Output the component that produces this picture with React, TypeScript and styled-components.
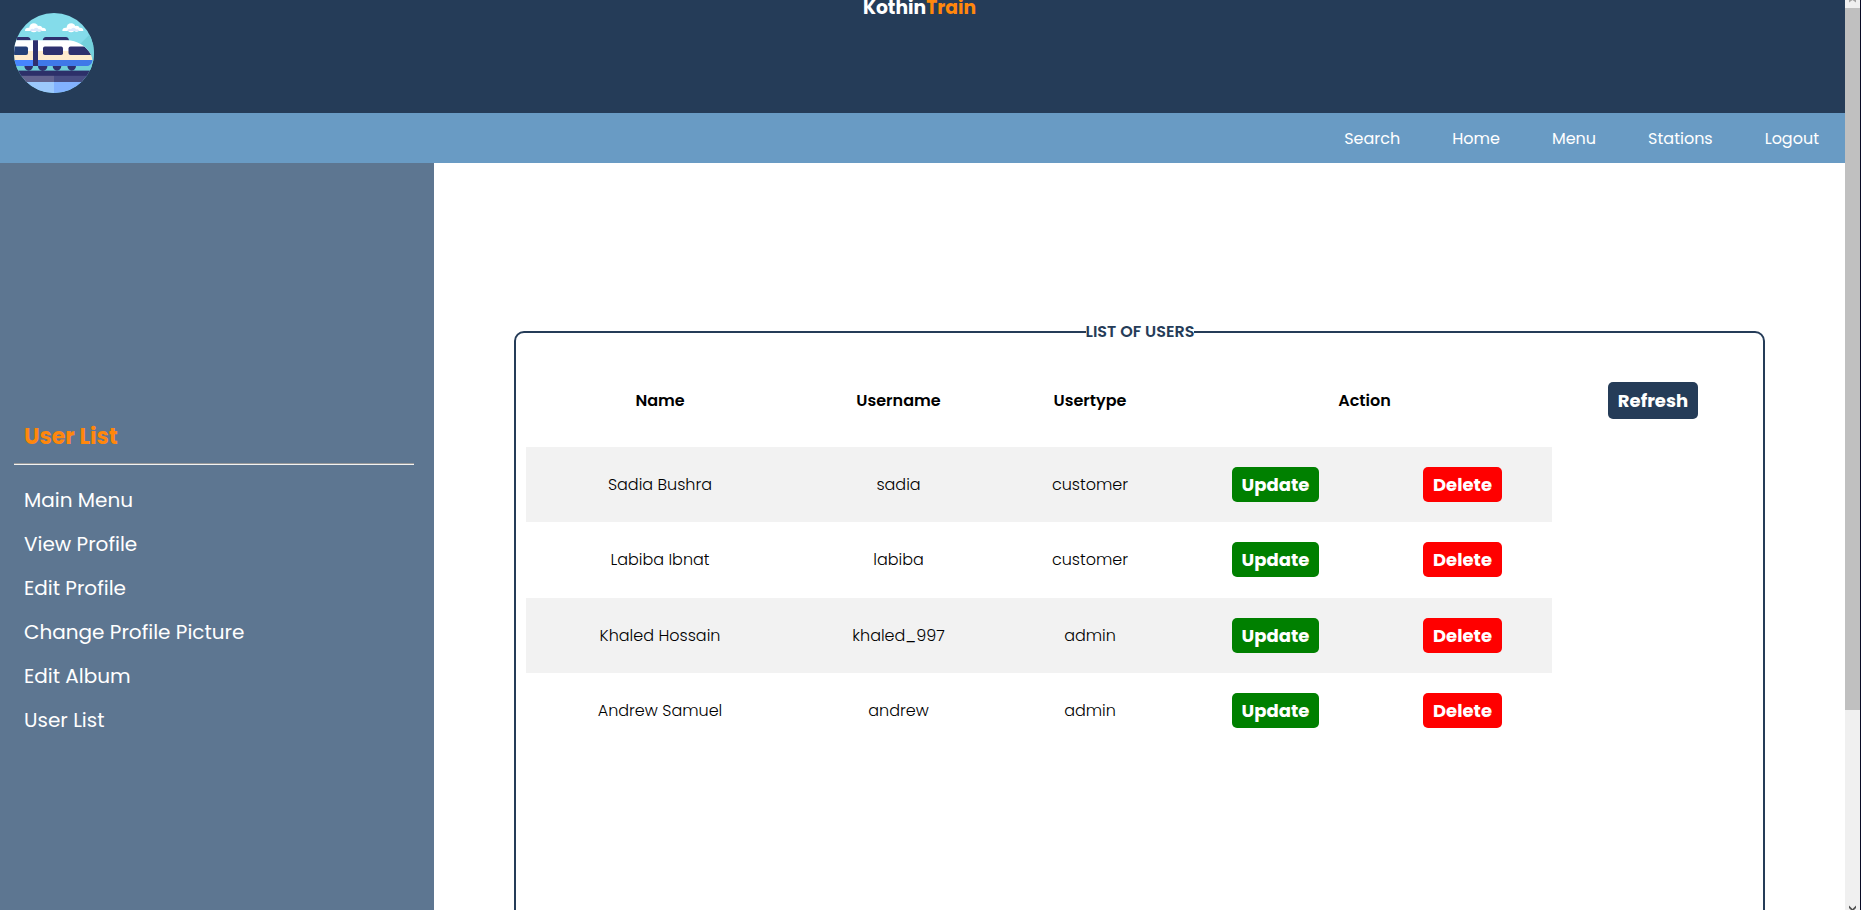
import React from "react";
import styled, { createGlobalStyle } from "styled-components";

const GlobalStyle = createGlobalStyle`
  * { box-sizing: border-box; }
  body {
    margin: 0;
    overflow: hidden;
    background: #fff;
    color: #000;
    font-family: "Poppins", "Inter", sans-serif;
    font-size: 16px;
  }
`;

const Window = styled.div`
  display: flex;
  width: 1861px;
  height: 910px;
  overflow: hidden;
  border-right: 1px solid #080a24;
`;

const Page = styled.div`
  display: flex;
  flex-direction: column;
  width: 1845px;
  flex-shrink: 0;
`;

const Header = styled.header`
  display: grid;
  grid-template-columns: 1fr auto 1fr;
  height: 113px;
  flex-shrink: 0;
  padding: 0 20px 0 14px;
  background: #253c58;
`;

const Logo = styled.svg`
  width: 80px;
  height: 80px;
  margin-top: 13px;
`;

const Brand = styled.h3`
  margin: 0;
  color: #fff;
  font-size: 18.72px;
  font-weight: 700;
  line-height: 15px;
`;

const Accent = styled.span`
  color: #ff870c;
`;

const Nav = styled.nav`
  display: flex;
  justify-content: flex-end;
  height: 50px;
  flex-shrink: 0;
  background: #699bc4;
`;

const NavLink = styled.a`
  padding: 0 26px;
  color: #fff;
  line-height: 51px;
`;

const Main = styled.div`
  display: flex;
  flex: 1;
  min-height: 0;
`;

const Sidebar = styled.aside`
  width: 434px;
  flex-shrink: 0;
  padding: 259px 20px 0 14px;
  background: #5d7691;
`;

const SideTitle = styled.h2`
  margin: 0;
  padding-left: 10px;
  color: #ff870c;
  font-size: 22px;
  font-weight: 700;
  line-height: 30px;
`;

const Divider = styled.hr`
  height: 2px;
  margin: 11px 0 13px;
  border: 0;
  border-top: 1px solid #9a9a9a;
  background: #f2f2f2;
`;

const SideLink = styled.a`
  display: block;
  padding-left: 10px;
  color: #fff;
  font-size: 20px;
  line-height: 44px;
`;

const Content = styled.main`
  flex: 1;
  padding: 157px 80px 0;
`;

const Panel = styled.fieldset`
  min-width: 0;
  height: 900px;
  margin: 0;
  padding: 10px 9px 0 10px;
  border: 2px solid #253c58;
  border-radius: 10px;
`;

const Legend = styled.legend`
  margin: 0 auto;
  padding: 0;
  color: #253c58;
  font-size: 16px;
  font-weight: 600;
  line-height: 24px;
`;

const Table = styled.div`
  display: flex;
  flex-direction: column;
`;

const HeadRow = styled.div`
  display: grid;
  grid-template-columns: 268px 209px 174px 375px 202px;
  height: 93px;
  font-weight: 600;
`;

const Row = styled.div<{ $shaded: boolean }>`
  display: grid;
  grid-template-columns: 268px 209px 174px 197px 177px;
  width: 1026px;
  height: 75.25px;
  font-weight: 300;
  background: ${(p) => (p.$shaded ? "#f2f2f2" : "transparent")};
`;

const Cell = styled.div`
  display: flex;
  align-items: center;
  justify-content: center;
`;

const Button = styled.button<{ $color: string; $width: number; $height?: number }>`
  display: flex;
  align-items: center;
  justify-content: center;
  width: ${(p) => p.$width}px;
  height: ${(p) => p.$height ?? 35}px;
  padding: 0;
  border: 0;
  border-radius: 5px;
  background: ${(p) => p.$color};
  color: #fff;
  font-family: inherit;
  font-size: 18px;
  font-weight: 700;
`;

const ScrollBar = styled.div`
  display: flex;
  flex-direction: column;
  justify-content: space-between;
  width: 15px;
  flex-shrink: 0;
  background: #f0f0f0;
`;

const Thumb = styled.div`
  height: 702px;
  margin-bottom: auto;
  background: #c0c0c0;
`;

const Arrow = styled.svg`
  display: block;
  width: 15px;
  height: 8px;
  flex-shrink: 0;
`;

const navItems = ["Search", "Home", "Menu", "Stations", "Logout"];

const sideItems = [
  "Main Menu",
  "View Profile",
  "Edit Profile",
  "Change Profile Picture",
  "Edit Album",
  "User List",
];

const columns = ["Name", "Username", "Usertype", "Action"];

const users = [
  { name: "Sadia Bushra", username: "sadia", usertype: "customer" },
  { name: "Labiba Ibnat", username: "labiba", usertype: "customer" },
  { name: "Khaled Hossain", username: "khaled_997", usertype: "admin" },
  { name: "Andrew Samuel", username: "andrew", usertype: "admin" },
];

const Cloud = ({ x }: { x: number }) => (
  <g transform={`translate(${x} 10)`}>
    <g fill="#fff">
      <path d="M0 8A3.200 3.200 0 0 1 3.200 4.800H17.800A3.200 3.200 0 0 1 21 8Z" />
      <circle cx="8.8" cy="4.8" r="4.5" />
      <circle cx="14.2" cy="5.8" r="3" />
    </g>
    <path d="M5 8A2.400 2.400 0 0 1 8.600 6.200 2.900 2.900 0 0 1 13.800 6.400 2.300 2.300 0 0 1 17 8Z" fill="#dce9fd" />
  </g>
);

const TrainLogo = () => (
  <Logo viewBox="0 0 80 80">
    <defs>
      <clipPath id="disc">
        <circle cx="40" cy="40" r="40" />
      </clipPath>
      <clipPath id="body">
        <path d="M0 27.300H53C63 27.300 71.500 33 76 40c2 3.500 2.800 7 2 9-1 2.600-3 4-6 4H0Z" />
      </clipPath>
    </defs>
    <g clipPath="url(#disc)">
      <rect width="80" height="80" fill="#84dcea" />
      <path d="M80 17 40 57.600H80Z" fill="#74d1dc" />
      <rect y="53" width="80" height="5" fill="#70cfd8" />
      <Cloud x={11} />
      <Cloud x={48.3} />
      <path
        d="M3 27.500V24H13.500Q16.500 24 16.700 27.500ZM28.700 27.500Q29 24 32 24H51.800Q54.700 24 55 27.500Z"
        fill="#2e306e"
      />
      <g clipPath="url(#body)">
        <rect y="27" width="80" height="12" fill="#fff" />
        <rect y="38" width="80" height="9.5" fill="#ffebcd" />
        <rect y="47" width="80" height="6.5" fill="#4685ff" />
        <rect x="19" y="47" width="61" height="6.5" fill="#3f78e8" />
        <path d="M0 33.600H12Q14 33.600 14 35.600V40Q14 42 12 42H0Z" fill="#244078" />
        <rect x="29" y="33.6" width="20" height="8.4" rx="1.8" fill="#2e306e" />
        <path
          d="M56.500 33.600H70.500Q75 37.500 77.200 42H56.500Q54.500 42 54.500 40V35.600Q54.500 33.600 56.500 33.600Z"
          fill="#2e306e"
        />
        <rect x="19" y="27" width="5" height="27" fill="#2e306e" />
      </g>
      <path
        d="M10.400 53h8.600a4.300 4.700 0 0 1-8.600 0ZM24 53h9.400a4.500 4.700 0 0 1-9.400 0ZM38.700 53h8.600a4.300 4.700 0 0 1-8.600 0ZM53.400 53H62a4.300 4.700 0 0 1-8.600 0Z"
        fill="#2e306e"
      />
      <rect y="57.6" width="80" height="5.4" fill="#2d3069" />
      <rect y="62.8" width="40" height="6.4" fill="#62638e" />
      <rect x="40" y="62.8" width="40" height="6.4" fill="#474d82" />
      <rect y="69" width="40" height="11" fill="#9cc9fc" />
      <rect x="40" y="69" width="40" height="11" fill="#82b2ff" />
    </g>
  </Logo>
);

export default function App() {
  return (
    <Window>
      <GlobalStyle />
      <Page>
        <Header>
          <TrainLogo />
          <Brand>
            Kothin<Accent>Train</Accent>
          </Brand>
        </Header>
        <Nav>
          {navItems.map((label) => (
            <NavLink key={label}>{label}</NavLink>
          ))}
        </Nav>
        <Main>
          <Sidebar>
            <SideTitle>User List</SideTitle>
            <Divider />
            {sideItems.map((label) => (
              <SideLink key={label}>{label}</SideLink>
            ))}
          </Sidebar>
          <Content>
            <Panel>
              <Legend>LIST OF USERS</Legend>
              <Table>
                <HeadRow>
                  {columns.map((label) => (
                    <Cell key={label}>{label}</Cell>
                  ))}
                  <Cell>
                    <Button $color="#253c58" $width={90} $height={37}>
                      Refresh
                    </Button>
                  </Cell>
                </HeadRow>
                {users.map((user, index) => (
                  <Row key={user.username} $shaded={index % 2 === 0}>
                    <Cell>{user.name}</Cell>
                    <Cell>{user.username}</Cell>
                    <Cell>{user.usertype}</Cell>
                    <Cell>
                      <Button $color="#008000" $width={87}>
                        Update
                      </Button>
                    </Cell>
                    <Cell>
                      <Button $color="#ff0000" $width={79}>
                        Delete
                      </Button>
                    </Cell>
                  </Row>
                ))}
              </Table>
            </Panel>
          </Content>
        </Main>
      </Page>
      <ScrollBar>
        <Arrow viewBox="0 0 15 8">
          <path d="M4 2.500V0H11V2.500L7.500 0Z" fill="#a3a3a3" />
        </Arrow>
        <Thumb />
        <Arrow viewBox="0 0 15 8">
          <path d="M4 3.500 7.500 7 11 3.500V6L8.500 8.500H6.500L4 6Z" fill="#505050" />
        </Arrow>
      </ScrollBar>
    </Window>
  );
}
